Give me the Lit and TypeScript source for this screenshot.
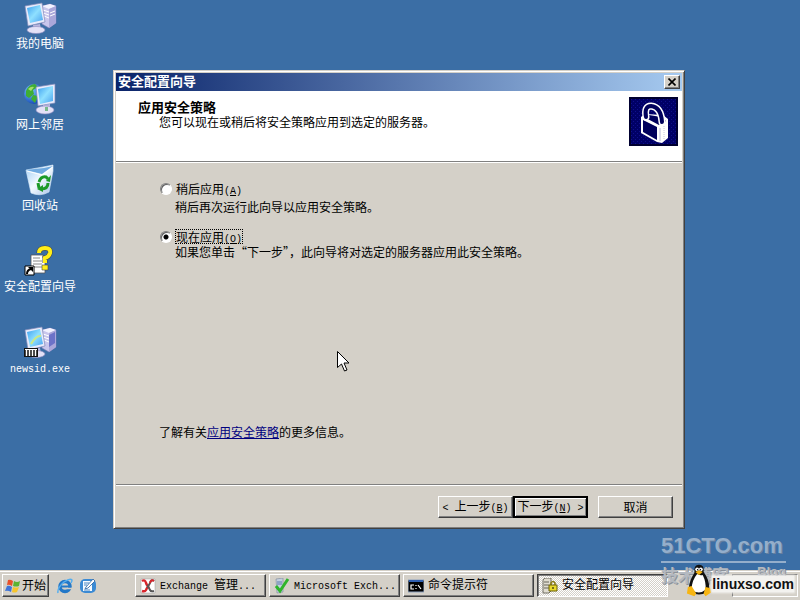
import { LitElement, html, css, svg, TemplateResult } from "lit";
import { customElement, state } from "lit/decorators.js";
import { classMap } from "lit/directives/class-map.js";

const monitor = svg`
  <path d="M3 4 L20 1 L23 20 L6 24 Z" fill="#e8ebfb" stroke="#8088b8" stroke-width=".7"/>
  <path d="M5 6 L18 3 L21 18 L8 21 Z" fill="url(#screen)"/>
  <path d="M11 23 L18 22 L19 27 L12 28 Z" fill="#b9b6de"/>
  <ellipse cx="14" cy="28" rx="9" ry="3.500" fill="#e3e1f6" stroke="#8d8abf" stroke-width=".6"/>`;

const screenGradient = svg`
  <linearGradient id="screen" x1="0" y1="0" x2="1" y2="1">
    <stop offset="0" stop-color="#3da0f0"/><stop offset=".5" stop-color="#8fe0ff"/><stop offset="1" stop-color="#4aa2ee"/>
  </linearGradient>`;

const tower = svg`
  <path d="M20 4 L28 2 L34 4 L34 21 L27 26 L20 22 Z" fill="#c9c6ec" stroke="#7d7bb5" stroke-width=".6"/>
  <path d="M20 4 L28 2 L34 4 L27 7 Z" fill="#f3f2ff"/>
  <path d="M27 7 L34 4 L34 21 L27 26 Z" fill="#aaa7da"/>
  <path d="M21 8 L27 10 M21 11 L27 13 M22 14 L27 16 M28 11 L33 9 M28 14 L33 12" stroke="#fff" stroke-width="1"/>`;

const desktopIcons: { label: string; latin?: boolean; art: TemplateResult }[] = [
  {
    label: "我的电脑",
    art: html`<svg viewBox="0 0 36 32" aria-hidden="true"><defs>${screenGradient}</defs>${tower}${monitor}</svg>`,
  },
  {
    label: "网上邻居",
    art: html`<svg viewBox="0 0 36 32" aria-hidden="true">
      <defs>${screenGradient}
        <radialGradient id="globe" cx=".35" cy=".3" r=".8"><stop offset="0" stop-color="#7cc6ff"/><stop offset="1" stop-color="#0c3fb0"/></radialGradient>
      </defs>
      <circle cx="12" cy="11" r="10" fill="url(#globe)"/>
      <path d="M4 8 Q7 1 13 1 L16 4 L11 7 L12 11 L7 15 L4 13 Z M11 12 L16 13 L13 20 L9 16 Z" fill="#3fae35"/>
      <path d="M6 6 Q9 3 12 4 L9 8 Z" fill="#a6e06a"/>
      <path d="M14 4 L33 1 L33 20 L16 23 Z" fill="#e8ebfb" stroke="#8088b8" stroke-width=".7"/>
      <path d="M16 6 L31 3 L31 18 L18 21 Z" fill="url(#screen)"/>
      <path d="M21 22 L28 21 L28 26 L21 26 Z" fill="#b9b6de"/>
      <ellipse cx="23" cy="27" rx="9" ry="4" fill="#e3e1f6" stroke="#8d8abf" stroke-width=".6"/>
      <path d="M23 24 L26 24 L26 28 L23 28 Z" fill="#79b98c"/>
    </svg>`,
  },
  {
    label: "回收站",
    art: html`<svg viewBox="0 0 36 32" aria-hidden="true">
      <defs><linearGradient id="bin" x1="0" y1="0" x2="1" y2="1"><stop offset="0" stop-color="#9fcdf5"/><stop offset=".5" stop-color="#f4faff"/><stop offset="1" stop-color="#a4bfe6"/></linearGradient></defs>
      <path d="M4 6 L21 3 L31 1 L31 7 L27 28 Q18 33 9 29 Z" fill="url(#bin)" stroke="#dcecfb" stroke-width=".6"/>
      <path d="M4 6 L20 10 L31 2 L22 4 Z" fill="#6fa9df"/>
      <path d="M5 7 L20 11 L31 3" fill="none" stroke="#fff"/>
      <g fill="none" stroke="#1c9a28" stroke-width="3">
        <path d="M17 18 Q19 12 24 13 L26 15"/><path d="M26 19 Q26 25 19 25"/><path d="M16 19 L17 24"/>
      </g>
      <path d="M24 17 L29 11 L28 18 Z M21 21 L15 25 L21 28 Z" fill="#1c9a28"/>
    </svg>`,
  },
  {
    label: "安全配置向导",
    art: html`<svg viewBox="0 0 36 32" aria-hidden="true">
      <path d="M9 10 H21 V13 H23 V28 H9 Z" fill="#fff" stroke="#555" stroke-width=".8"/>
      <path d="M11 13 H18 M11 16 H20 M11 19 H20 M11 22 H20" stroke="#888" stroke-width="1"/>
      <path d="M17 8 Q17 3 23 3 Q29 3 28 8 Q27 12 23 13 V18" fill="none" stroke="#444" stroke-width="5"/>
      <path d="M17 8 Q17 3 23 3 Q29 3 28 8 Q27 12 23 13 V18" fill="none" stroke="#ffee18" stroke-width="4"/>
      <path d="M20 20 H26 V25 H20 Z" fill="#ffee18" stroke="#444" stroke-width=".6"/>
      <path d="M3 21 H12 V30 H3 Z" fill="#fff" stroke="#000"/>
      <path d="M5 29 Q5 25 9 24" fill="none" stroke="#000" stroke-width="2"/><path d="M6 22 H11 V27 Z"/>
    </svg>`,
  },
  {
    label: "newsid.exe",
    latin: true,
    art: html`<svg viewBox="0 0 36 32" aria-hidden="true"><defs>${screenGradient}</defs>
      ${tower}${monitor}
      <path d="M27 9 L33 6 L33 17 L27 21 Z" fill="#6c72c8"/>
      <path d="M9 18 Q14 9 19 10" stroke="#c9e88a" stroke-width="2" fill="none"/>
      <path d="M2 22 H16 V31 H2 Z" fill="#111"/>
      <path d="M4.500 24 V30 M7.500 24 V30 M10.500 24 V30 M13.500 24 V30" stroke="#fff" stroke-width="1.500"/>
      <path d="M3 23.500 H15" stroke="#fff"/>
    </svg>`,
  },
];

const exchangeArt = html`<svg viewBox="0 0 16 16" aria-hidden="true">
  <path d="M1 1 H15 V15 H1 Z" fill="#fff" stroke="#999" stroke-width=".5"/>
  <path d="M2 3 Q5 1 6 5 Q7 8 9 8 Q7 9 6 12 Q5 14 2 13" fill="none" stroke="#d9252b" stroke-width="2.400"/>
  <path d="M14 3 Q11 1 10 5 Q9 8 7 8 Q9 9 10 12 Q11 14 14 13" fill="none" stroke="#555" stroke-width="2"/>
  <path d="M10 5 Q11 1 14 3" fill="none" stroke="#d9252b" stroke-width="2"/>
</svg>`;

const checkArt = html`<svg viewBox="0 0 16 16" aria-hidden="true">
  <path d="M2 1 L9 0 V14 L3 15 Z" fill="#c3cfdf" stroke="#7a8799" stroke-width=".6"/>
  <path d="M3 4 H8 M3 6 H8" stroke="#5a78a8"/>
  <path d="M2 8 L6 13 L14 1" fill="none" stroke="#2fb52c" stroke-width="3"/>
</svg>`;

const promptArt = html`<svg viewBox="0 0 16 16" aria-hidden="true">
  <path d="M0 2 H16 V14 H0 Z" fill="#000" stroke="#8fa3c0"/><path d="M1 2 H15 V4 H1 Z" fill="#2f5fb0"/>
  <path d="M6 7 H3 V11 H6 M8 7 V8 M8 10 V11 M10 7 L13 11" fill="none" stroke="#fff" stroke-width="1.200"/>
</svg>`;

const serverLockArt = html`<svg viewBox="0 0 16 16" aria-hidden="true">
  <path d="M1 2 L3 0 H9 V13 L7 15 H1 Z" fill="#e0dcd0" stroke="#55534a" stroke-width=".8"/>
  <path d="M2 4 H7 M2 7 H7 M2 10 H7" stroke="#66645a"/>
  <path d="M9 7 V5 Q11 2 13 5 V7" fill="none" stroke="#8a7b10" stroke-width="1.500"/>
  <path d="M7 7 H15 V13 H7 Z" fill="#e8d92c" stroke="#6b6008"/><path d="M11 9 V11" stroke="#000"/>
</svg>`;

const tasks: { cjk?: string; latin?: string; end?: string; active?: boolean; art: TemplateResult }[] = [
  { latin: "Exchange ", cjk: "管理", end: "...", art: exchangeArt },
  { latin: "Microsoft Exch...", art: checkArt },
  { cjk: "命令提示符", art: promptArt },
  { cjk: "安全配置向导", active: true, art: serverLockArt },
];

const shared = css`
  * { box-sizing: border-box; }
  svg { display: block; flex: none; }
  button { margin: 0; padding: 0; border: 0; background: none; color: inherit; font: inherit; }
  .latin { font: 10px/12px "Liberation Mono", monospace; white-space: pre; }
  u { text-underline-offset: 1px; }
`;

@customElement("wizard-dialog")
export class WizardDialog extends LitElement {
  @state() private choice = "now";

  static styles = [shared, css`
    :host {
      display: flex; flex-direction: column; background: #d4d0c8; color: #000; padding: 1px;
      border: 1px solid; border-color: #d4d0c8 #404040 #404040 #d4d0c8;
      box-shadow: inset 1px 1px #fff, inset -1px -1px #808080;
    }
    .frame { flex: 1; display: flex; flex-direction: column; padding: 1px; }
    .title {
      display: flex; align-items: center; justify-content: space-between; height: 18px; padding: 0 2px;
      background: linear-gradient(to right, #0a246a, #a6caf0); color: #fff;
    }
    h1, h2, p { margin: 0; }
    h1, h2 { font-size: 13px; line-height: 15px; font-weight: 700; }
    .title h1 { line-height: 18px; height: 20px; }
    .close {
      width: 16px; height: 14px; display: grid; place-items: center; background: #d4d0c8;
      border: 1px solid; border-color: #fff #404040 #404040 #fff; box-shadow: inset -1px -1px #808080;
    }
    .close svg { width: 8px; height: 8px; }
    .head {
      display: flex; justify-content: space-between; height: 71px; padding: 8px 4px 0 22px;
      background: #fff; border-bottom: 1px solid #808080; box-shadow: 0 1px #fff;
    }
    .head p { padding-left: 21px; }
    .lock { width: 49px; height: 49px; margin-top: -2px; }
    .body { flex: 1; display: flex; flex-direction: column; padding: 19px 12px 45px 43px; }
    .option { display: grid; grid-template-columns: 16px 1fr; margin-bottom: 15px; }
    .option p { grid-column: 2; }
    .option.spaced { row-gap: 3px; }
    .option label { justify-self: start; height: 15px; padding: 0 1px; white-space: nowrap; }
    input:checked + label { outline: 1px dotted #000; outline-offset: -1px; }
    input {
      appearance: none; width: 12px; height: 12px; margin: 2px 0 0 1px; border-radius: 50%; background: #fff;
      border: 1px solid; border-color: #808080 #fff #fff #808080; box-shadow: inset 1px 1px #606060;
    }
    input:checked { background: radial-gradient(circle, #000 2px, #fff 3px); }
    a { color: #00007f; }
    .more { margin-top: auto; }
    .foot {
      display: flex; justify-content: flex-end; padding: 11px 9px 8px; border-top: 1px solid #808080;
      box-shadow: inset 0 1px #fff;
    }
    .push {
      width: 75px; height: 22px; padding-bottom: 2px; white-space: nowrap;
      border: 1px solid; border-color: #fff #404040 #404040 #fff; box-shadow: inset -1px -1px #808080;
    }
    .push.default { border: 2px solid #000; box-shadow: inset 1px 1px #fff, inset -1px -1px #808080; }
    .push.cancel { margin-left: 10px; }
  `];

  render() {
    return html`
      <div class="frame">
        <div class="title">
          <h1>安全配置向导</h1>
          <button class="close" aria-label="关闭">
            <svg viewBox="0 0 8 8"><path d="M0.500 0.500 L7.500 7.500 M7.500 0.500 L0.500 7.500" stroke="#000" stroke-width="1.600"/></svg>
          </button>
        </div>
        <div class="head">
          <div><h2>应用安全策略</h2><p>您可以现在或稍后将安全策略应用到选定的服务器。</p></div>
          <svg class="lock" viewBox="0 0 49 49" aria-hidden="true">
            <defs><pattern id="dots" width="4" height="4" patternUnits="userSpaceOnUse"><rect width="4" height="4" fill="#000066"/><path d="M0 0h1v1h-1zM2 2h1v1h-1z" fill="#10108c"/></pattern></defs>
            <rect width="49" height="49" fill="#000030"/><rect x="2" y="2" width="45" height="45" fill="url(#dots)"/>
            <path d="M12 20 L16 17 L34 18 L39 22 V41 L33 46 L28 45 L12 36 Z" fill="#fff"/>
            <path d="M14 23 L28 30 V43 L14 35 Z" fill="#00005c"/>
            <path d="M15 20 L20 18 L32 20 L37 24 L30 28 Z" fill="#00005c"/>
            <path d="M17 20 Q15 9 22 9 Q32 10 33 25" fill="none" stroke="#fff" stroke-width="7" stroke-linecap="round"/>
            <path d="M17 20 Q15 9 22 9 Q32 10 33 25" fill="none" stroke="#00005c" stroke-width="4" stroke-linecap="round"/>
            <path d="M31 31 V44" stroke="#b8b8d8"/><path d="M35 29 V42" stroke="#c8c8e0" stroke-dasharray="1 1"/>
          </svg>
        </div>
        <div class="body">
          <div class="option spaced">
            <input type="radio" name="when" id="later" .checked=${this.choice === "later"} @change=${() => (this.choice = "later")} />
            <label for="later">稍后应用<span class="latin">(<u>A</u>)</span></label>
            <p>稍后再次运行此向导以应用安全策略。</p>
          </div>
          <div class="option">
            <input type="radio" name="when" id="now" .checked=${this.choice === "now"} @change=${() => (this.choice = "now")} />
            <label for="now">现在应用<span class="latin">(<u>O</u>)</span></label>
            <p>如果您单击“下一步”，此向导将对选定的服务器应用此安全策略。</p>
          </div>
          <p class="more">了解有关<a href="#policy">应用安全策略</a>的更多信息。</p>
        </div>
        <div class="foot">
          <button class="push"><span class="latin">&lt; </span>上一步<span class="latin">(<u>B</u>)</span></button>
          <button class="push default">下一步<span class="latin">(<u>N</u>) &gt;</span></button>
          <button class="push cancel">取消</button>
        </div>
      </div>`;
  }
}

@customElement("task-bar")
export class TaskBar extends LitElement {
  static styles = [shared, css`
    :host {
      display: flex; align-items: stretch; height: 30px; padding: 4px 2px 3px; background: #d4d0c8;
      color: #000; box-shadow: inset 0 1px #d4d0c8, inset 0 2px #fff;
    }
    .raised {
      border: 1px solid; border-color: #fff #404040 #404040 #fff; box-shadow: inset -1px -1px #808080;
    }
    .start { width: 47px; display: flex; align-items: center; gap: 1px; padding: 0 2px; white-space: nowrap; }
    .start span, .text { padding-bottom: 2px; }
    .start svg, .quick svg, .task svg { width: 16px; height: 16px; }
    .quick { display: flex; align-items: center; gap: 7px; width: 86px; padding: 0 8px; }
    .tasks { flex: 1; display: flex; gap: 3px; min-width: 0; }
    .task { flex: 1; max-width: 131px; display: flex; align-items: center; gap: 4px; padding: 0 4px; min-width: 0; white-space: nowrap; overflow: hidden; }
    .task.active {
      border: 1px solid; border-color: #404040 #fff #fff #404040; box-shadow: inset 1px 1px #808080;
      background: repeating-conic-gradient(#fff 0 25%, #d4d0c8 0 50%) 0 0 / 2px 2px;
    }
    .tray { width: 66px; border: 1px solid; border-color: #808080 #fff #fff #808080; }
  `];

  render() {
    return html`
      <button class="start raised">
        <svg viewBox="0 0 16 16" aria-hidden="true">
          <path d="M3 2 Q5 1 8 3 L7 8 Q4 6 2 7 Z" fill="#e8502a"/><path d="M9 3 Q12 5 15 3 L14 8 Q11 9 8 8 Z" fill="#5cb331"/>
          <path d="M2 8 Q4 7 7 9 L6 14 Q3 12 0 13 Z" fill="#3f74d8"/><path d="M8 9 Q11 10 14 9 L12 14 Q9 15 7 14 Z" fill="#f7c52c"/>
        </svg><span>开始</span>
      </button>
      <div class="quick">
        <button aria-label="Internet Explorer"><svg viewBox="0 0 16 16">
          <circle cx="8" cy="8.500" r="5" fill="none" stroke="#2378c8" stroke-width="3.500"/>
          <path d="M4 8.500 H13" stroke="#2378c8" stroke-width="2"/><path d="M10 10.500 H16" stroke="#d4d0c8" stroke-width="1.500"/>
          <path d="M1 15 Q0 10 7 4 Q13 0 15 2 Q15 3 14 5" fill="none" stroke="#54aef0" stroke-width="1.500"/>
        </svg></button>
        <button aria-label="显示桌面"><svg viewBox="0 0 16 16">
          <rect x="0" y="1" width="16" height="14" rx="5" fill="#3b8ad4"/><rect x="3" y="3" width="9" height="10" fill="#f4faff"/>
          <path d="M6 9 L13 1 L15 3 L8 10 L5 11 Z" fill="#fff" stroke="#265fa0" stroke-width=".8"/><path d="M4 5 H9 M4 7 H7 M4 12 H10" stroke="#4d88c4"/>
        </svg></button>
      </div>
      <div class="tasks">
        ${tasks.map((t) => html`
          <button class=${classMap({ task: true, raised: !t.active, active: !!t.active })}>
            ${t.art}<span class="text"><span class="latin">${t.latin ?? ""}</span>${t.cjk ?? ""}<span class="latin">${t.end ?? ""}</span></span>
          </button>`)}
      </div>
      <div class="tray"></div>`;
  }
}

@customElement("app-root")
export class AppRoot extends LitElement {
  static styles = [shared, css`
    :host {
      display: flex; flex-direction: column; position: relative; min-height: 100vh; overflow: hidden;
      background: #3b6ea5; font: 12px/15px "Noto Sans CJK SC", "Liberation Sans", sans-serif;
    }
    main { flex: 1; position: relative; }
    .icons { display: grid; grid-template-columns: 80px; grid-auto-rows: 81px; color: #fff; padding-top: 2px; }
    .shortcut { display: flex; flex-direction: column; align-items: center; justify-content: start; gap: 1px; white-space: nowrap; }
    .shortcut svg { width: 36px; height: 32px; }
    wizard-dialog { position: absolute; inset: 70px 115px 41px 113px; }
    .pointer { position: absolute; left: 337px; top: 351px; width: 13px; height: 21px; }
    .mark {
      position: absolute; right: 14px; bottom: 13px; width: 125px; display: flex; flex-direction: column;
      color: #94aecb; text-shadow: 1px 1px #66809f; white-space: nowrap; font-weight: 700;
    }
    .mark .big { font: 700 22px/30px "Liberation Sans", sans-serif; border-bottom: 2px solid #94aecb; }
    .mark .small { display: flex; justify-content: space-between; font-size: 17px; line-height: 24px; color: #b4b9c0; text-shadow: 1px 1px #8c929a; }
    .mark .blog { font: 700 13px/18px "Liberation Sans", sans-serif; }
    .brand { position: absolute; right: 6px; bottom: 3px; display: flex; align-items: end; color: #111; }
    .brand svg { width: 26px; height: 34px; }
    .brand span { font: 700 14px/16px "Liberation Sans", sans-serif; background: #f3f2ef; box-shadow: 0 0 2px 1px #f3f2ef; margin-bottom: 5px; }
  `];

  render() {
    return html`
      <main>
        <div class="icons">
          ${desktopIcons.map((i) => html`
            <button class="shortcut">${i.art}<span><span class=${classMap({ latin: !!i.latin })}>${i.label}</span></span></button>`)}
        </div>
        <wizard-dialog role="dialog" aria-label="安全配置向导"></wizard-dialog>
        <svg class="pointer" viewBox="0 0 13 21" aria-hidden="true">
          <path d="M.5 .5 V16.500 L4.500 13 L7.500 20 L10 19 L7 12 H12 Z" fill="#fff" stroke="#000"/>
        </svg>
      </main>
      <task-bar></task-bar>
      <div class="mark"><span class="big">51CTO.com</span><span class="small">技术博客<span class="blog">Blog</span></span></div>
      <div class="brand">
        <svg viewBox="0 0 28 35" aria-hidden="true">
          <path d="M14 1 Q20 1 19 9 Q25 17 25 26 Q23 33 14 33 Q5 33 3 26 Q4 17 9 10 Q8 1 14 1 Z" fill="#111"/>
          <path d="M12 11 Q16 13 18 12 Q22 20 21 28 Q14 34 6 28 Q6 18 12 11 Z" fill="#fff"/>
          <circle cx="12" cy="6" r="2" fill="#fff"/><circle cx="16" cy="6" r="2" fill="#fff"/>
          <circle cx="12.500" cy="6.500" r=".8"/><circle cx="15.500" cy="6.500" r=".8"/>
          <path d="M10 9 L14 7 L18 9 L14 12 Z" fill="#f7b512"/>
          <path d="M2 25 L6 24 L11 32 L9 35 L1 32 Z M21 25 L26 26 L27 31 L21 35 L19 32 Z" fill="#f7b512"/>
        </svg>
        <span>linuxso.com</span>
      </div>`;
  }
}
